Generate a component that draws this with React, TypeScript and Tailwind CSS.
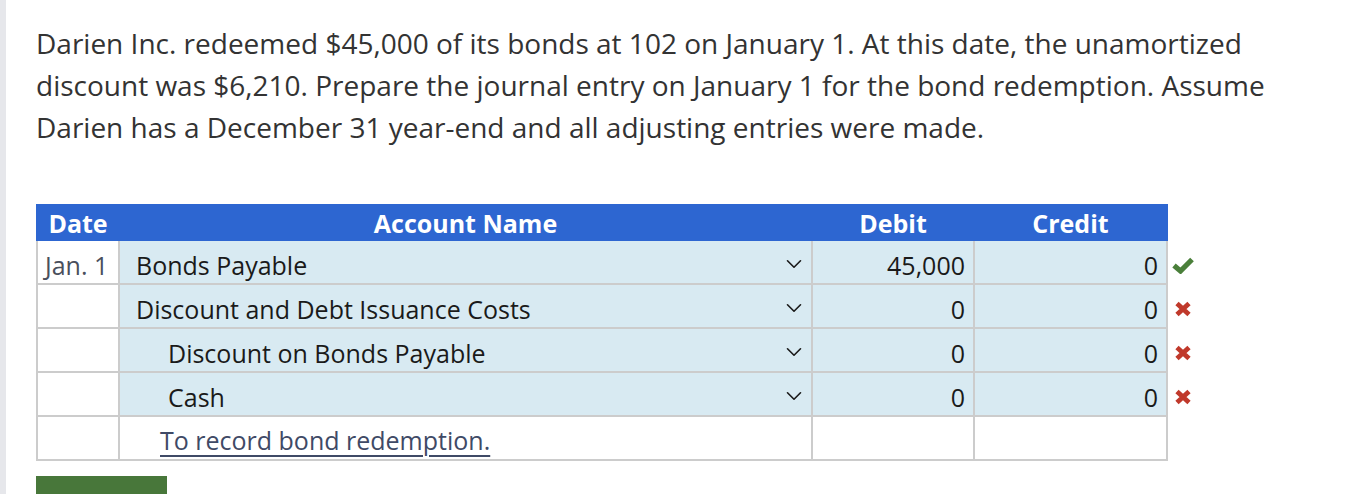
import {ChevronDown} from "lucide-react";

type Row = {
    date: string;
    account: string;
    indent: boolean;
    debit: string;
    credit: string;
    ok: boolean;
};

const rows: Row[] = [
    {date: "Jan. 1", account: "Bonds Payable", indent: false, debit: "45,000", credit: "0", ok: true},
    {date: "", account: "Discount and Debt Issuance Costs", indent: false, debit: "0", credit: "0", ok: false},
    {date: "", account: "Discount on Bonds Payable", indent: true, debit: "0", credit: "0", ok: false},
    {date: "", account: "Cash", indent: true, debit: "0", credit: "0", ok: false},
];

const cols = "grid grid-cols-[80px_691px_160px_191px] grid-rows-[42px] gap-x-[2px]";

function CheckMark() {
    return (
        <svg width="22" height="17" viewBox="0 0 22 17" className="text-[#4a7f3a]">
            <polyline points="2,8.5 8.5,14 20,2.5" fill="none" stroke="currentColor" strokeWidth="5.2"/>
        </svg>
    );
}

function CrossMark() {
    return (
        <svg width="18" height="16" viewBox="0 0 18 16" className="text-[#c0392b] ml-[2px]">
            <path d="M3 2.5 L15 13.5 M15 2.5 L3 13.5" fill="none" stroke="currentColor" strokeWidth="4.8"/>
        </svg>
    );
}

export default function App() {
    return (
        <div className="min-h-[494px] bg-white flex font-['Open_Sans',sans-serif]">
            <div className="w-[6px] bg-[#e6e7eb] shrink-0"/>
            <div className="pl-[30px] pt-[22px] flex-1 overflow-hidden">
                <p className="text-[28px] leading-[42px] text-[#333] w-[1250px]">
                    Darien Inc. redeemed $45,000 of its bonds at 102 on January 1. At this date, the unamortized discount was $6,210. Prepare the journal entry on January 1 for the bond redemption. Assume Darien has a December 31 year-end and all adjusting entries were made.
                </p>

                <div className="mt-[56px] w-[1160px] flex items-start">
                    <div className="w-[1132px] shrink-0">
                        <div className="bg-[#2d66d1] text-white font-bold text-[25px] leading-[30px] h-[37px] pt-[1px] px-[2px] grid grid-cols-[80px_691px_160px_191px] gap-x-[2px] items-center">
                            <div className="text-center">Date</div>
                            <div className="text-center">Account Name</div>
                            <div className="text-center">Debit</div>
                            <div className="text-center">Credit</div>
                        </div>
                        <div className="bg-[#cccccc] px-[2px] pb-[2px] flex flex-col gap-y-[2px]">
                            {rows.map((row, index) => (
                                <div key={index} className={`${cols} text-[25px] leading-[30px]`}>
                                    <div className="bg-white pl-[7px] pt-[6px] flex items-center text-[#4a4f5c]">{row.date}</div>
                                    <div className="bg-[#d8eaf2] pt-[6px] flex items-center justify-between pr-[4px] text-[#1a1a1a]">
                                        <span className={row.indent ? "pl-[48px]" : "pl-[16px]"}>{row.account}</span>
                                        <ChevronDown className="w-[26px] h-[26px] text-[#1a1a1a] -mt-[2px]" strokeWidth={1.5}/>
                                    </div>
                                    <div className="bg-[#d8eaf2] pt-[6px] flex items-center justify-end pr-[8px] text-[#1a1a1a]">{row.debit}</div>
                                    <div className="bg-[#d8eaf2] pt-[6px] flex items-center justify-end pr-[8px] text-[#1a1a1a]">{row.credit}</div>
                                </div>
                            ))}
                            <div className={`${cols} text-[25px] leading-[30px]`}>
                                <div className="bg-white"/>
                                <div className="bg-white pt-[4px] flex items-center pl-[40px]">
                                    <span className="underline underline-offset-[5px] decoration-[2px] text-[#3f4a66]">To record bond redemption.</span>
                                </div>
                                <div className="bg-white"/>
                                <div className="bg-white"/>
                            </div>
                        </div>
                    </div>
                    <div className="pt-[37px] flex flex-col gap-y-[2px] pl-[4px]">
                        {rows.map((row, index) => (
                            <div key={index} className="h-[42px] pt-[6px] flex items-center">
                                {row.ok ? <CheckMark/> : <CrossMark/>}
                            </div>
                        ))}
                    </div>
                </div>

                <div className="mt-[15px] w-[131px] h-[20px] bg-[#48773a]"/>
            </div>
        </div>
    )
}
